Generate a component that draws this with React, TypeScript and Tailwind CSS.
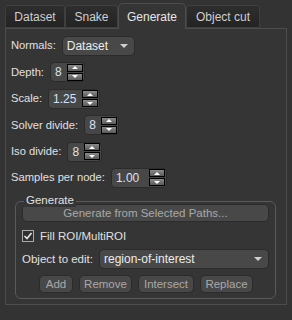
import React from 'react';

const font = { fontFamily: '"Liberation Sans", Arial, sans-serif' };

const Tab = ({ label, w, active }: { label: string; w: string; active?: boolean }) =>
    active ? (
        <div className={`${w} h-[26px] flex items-center justify-center rounded-t-[5px] border border-b-0 border-[#4d4d4d] bg-[#353535] text-[#e6e6e6] -mb-px z-10`}>
            {label}
        </div>
    ) : (
        <div className={`${w} mt-[3px] h-[23px] flex items-center justify-center rounded-t-[3px] border border-[#3f3f3f] bg-gradient-to-b from-[#2e2e2e] to-[#232323] text-[#cfcfcf]`}>
            {label}
        </div>
    );

const Arrows = () => (
    <div className="flex flex-col gap-px">
        <div className="w-[16px] h-[8px] border border-black bg-gradient-to-b from-[#8a8a8a] to-[#5a5a5a] flex items-center justify-center">
            <div className="w-0 h-0 border-l-[3px] border-r-[3px] border-b-[3px] border-l-transparent border-r-transparent border-b-white" />
        </div>
        <div className="w-[16px] h-[8px] border border-black bg-gradient-to-b from-[#8a8a8a] to-[#5a5a5a] flex items-center justify-center">
            <div className="w-0 h-0 border-l-[3px] border-r-[3px] border-t-[3px] border-l-transparent border-r-transparent border-t-white" />
        </div>
    </div>
);

const Spin = ({ value, w }: { value: string; w: string }) => (
    <div className={`${w} h-[20px] rounded-[4px] bg-[#474747] border border-[#2b2b2b] flex items-center justify-between pl-[4px] pr-[1px]`}>
        <span className="text-[#d6e2f5] text-[12px]">{value}</span>
        <Arrows />
    </div>
);

const Combo = ({ value, w }: { value: string; w: string }) => (
    <div className={`${w} h-[20px] rounded-[5px] bg-[#484848] border border-[#2b2b2b] flex items-center justify-between pl-[4px] pr-[6px] text-[#ececec] text-[12px]`}>
        <span>{value}</span>
        <div className="w-0 h-0 border-l-[4px] border-r-[4px] border-t-[4px] border-l-transparent border-r-transparent border-t-[#d0d0d0]" />
    </div>
);

const Btn = ({ label, w }: { label: string; w: string }) => (
    <div className={`${w} h-[18px] rounded-[5px] bg-[#484848] border border-[#2b2b2b] flex items-center justify-center text-[#a9a9a9]`}>
        {label}
    </div>
);

const Row = ({ label, children }: { label: string; children: React.ReactNode }) => (
    <div className="flex items-center gap-[6px] h-[20px]">
        <span className="text-[#e0e0e0] text-[11.2px]">{label}</span>
        {children}
    </div>
);

export default function App() {
    return (
        <div className="w-[292px] h-[320px] bg-[#333333] pt-[2px] px-[5px] text-[11px] leading-none" style={font}>
            <div className="flex items-end h-[26px] text-[12px]">
                <Tab label="Dataset" w="w-[60px]" />
                <Tab label="Snake" w="w-[53px]" />
                <Tab label="Generate" w="w-[68px]" active />
                <Tab label="Object cut" w="w-[74px]" />
            </div>
            <div className="w-[282px] h-[277px] border border-[#4d4d4d] bg-[#353535] pt-[7px] pl-[5px] flex flex-col gap-[6.4px] text-[11.5px]">
                <Row label="Normals:">
                    <Combo value="Dataset" w="w-[73px]" />
                </Row>
                <Row label="Depth:">
                    <Spin value="8" w="w-[35px]" />
                </Row>
                <Row label="Scale:">
                    <Spin value="1.25" w="w-[52px]" />
                </Row>
                <Row label="Solver divide:">
                    <Spin value="8" w="w-[35px]" />
                </Row>
                <Row label="Iso divide:">
                    <Spin value="8" w="w-[35px]" />
                </Row>
                <Row label="Samples per node:">
                    <Spin value="1.00" w="w-[56px]" />
                </Row>
                <div className="relative ml-[4px] mt-[7px] w-[261px] h-[98px] rounded-[6px] border border-[#5a5a5a] px-[6px] pt-[2px] flex flex-col">
                    <span className="absolute -top-[7px] left-[8px] bg-[#353535] px-[2px] text-[#e0e0e0]">Generate</span>
                    <Btn label="Generate from Selected Paths..." w="w-full" />
                    <div className="flex items-center gap-[6px] mt-[7px] h-[14px]">
                        <div className="w-[12px] h-[12px] border border-[#aaa] bg-[#2f2f2f] flex items-center justify-center">
                            <svg width="10" height="10" viewBox="0 0 10 10">
                                <path d="M1.5 5 L4 7.5 L8.5 2" fill="none" stroke="#e6e6e6" strokeWidth="1.6" />
                            </svg>
                        </div>
                        <span className="text-[#e0e0e0]">Fill ROI/MultiROI</span>
                    </div>
                    <div className="flex items-center gap-[6px] mt-[6px] h-[20px]">
                        <span className="text-[#e0e0e0]">Object to edit:</span>
                        <Combo value="region-of-interest" w="flex-1" />
                    </div>
                    <div className="flex gap-[6px] mt-[6px] ml-[17px]">
                        <Btn label="Add" w="w-[34px]" />
                        <Btn label="Remove" w="w-[53px]" />
                        <Btn label="Intersect" w="w-[56px]" />
                        <Btn label="Replace" w="w-[53px]" />
                    </div>
                </div>
            </div>
        </div>
    );
}
